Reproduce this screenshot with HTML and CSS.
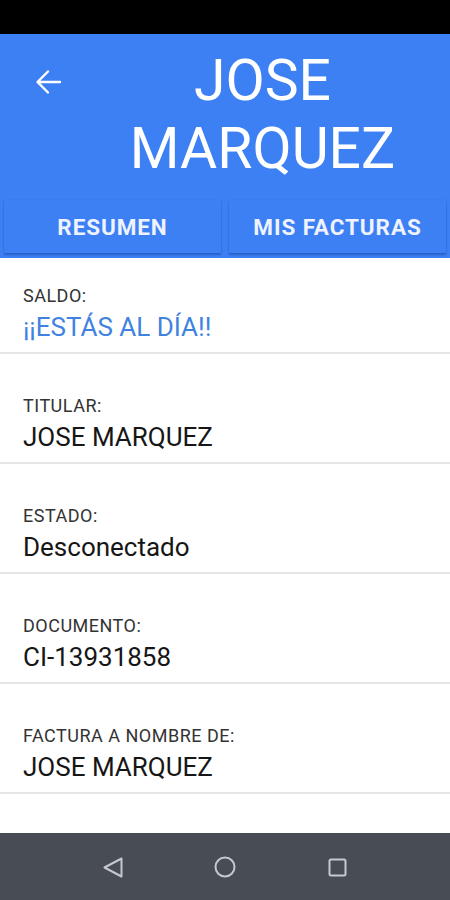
FILE: index.html
```html
<!DOCTYPE html>
<html>
<head>
<meta charset="utf-8">
<link rel="stylesheet" href="styles.css">
</head>
<body>
<div class="screen">
  <div class="statusbar"></div>
  <header class="header">
    <div class="titlerow">
      <div class="back">
        <svg width="30" height="30" viewBox="0 0 30 30"><path d="M27 15H5M15 4.5L4.5 15L15 25.5" fill="none" stroke="#fff" stroke-width="2.4" stroke-linecap="round" stroke-linejoin="round"/></svg>
      </div>
      <h1 class="title">JOSE<br>MARQUEZ</h1>
    </div>
    <div class="tabs">
      <div class="tab">RESUMEN</div>
      <div class="tab">MIS FACTURAS</div>
    </div>
  </header>
  <main class="content">
    <div class="row first">
      <div class="label">SALDO:</div>
      <div class="value ok">¡¡ESTÁS AL DÍA!!</div>
    </div>
    <div class="row">
      <div class="label">TITULAR:</div>
      <div class="value">JOSE MARQUEZ</div>
    </div>
    <div class="row">
      <div class="label">ESTADO:</div>
      <div class="value">Desconectado</div>
    </div>
    <div class="row">
      <div class="label">DOCUMENTO:</div>
      <div class="value">CI-13931858</div>
    </div>
    <div class="row">
      <div class="label">FACTURA A NOMBRE DE:</div>
      <div class="value">JOSE MARQUEZ</div>
    </div>
  </main>
  <nav class="navbar">
    <svg width="24" height="24" viewBox="0 0 24 24"><path d="M20.5 3.5 L3.5 12.5 L20.5 21.5 Z" fill="none" stroke="#c6c9ce" stroke-width="2" stroke-linejoin="round"/></svg>
    <svg width="24" height="24" viewBox="0 0 24 24"><circle cx="12" cy="12" r="9.5" fill="none" stroke="#c6c9ce" stroke-width="2"/></svg>
    <svg width="24" height="24" viewBox="0 0 24 24"><rect x="4.5" y="4.5" width="16" height="16" rx="1.5" fill="none" stroke="#c6c9ce" stroke-width="2"/></svg>
  </nav>
</div>
</body>
</html>
```
FILE: styles.css
```css
* { box-sizing: border-box; }
html, body { margin: 0; padding: 0; }
body { font-family: Roboto, "Liberation Sans", sans-serif; background: #fff; }
.screen { width: 450px; height: 900px; display: flex; flex-direction: column; overflow: hidden; }
.statusbar { height: 34px; background: #000; flex: none; }
.header { background: #3d80f3; padding: 13px 0 5px; flex: none; }
.titlerow { display: flex; align-items: flex-start; }
.back { width: 75px; padding: 20px 0 0 33px; flex: none; }
.back svg { display: block; }
.title { margin: 0; flex: 1; text-align: center; color: #fff; font-weight: 400; font-size: 57px; line-height: 68px; }
.tabs { display: flex; gap: 8px; padding: 17px 4px 0; }
.tab { flex: 1; height: 53px; display: flex; align-items: center; justify-content: center; color: #eef3ff; font-weight: 700; font-size: 22.5px; letter-spacing: 0.9px; background: #3d80f3; box-shadow: 0 2px 2px rgba(0,40,120,0.35), 0 0 1px rgba(0,40,120,0.2); }
.content { flex: 1; }
.row { padding: 42px 23px 0; height: 110px; border-bottom: 2px solid #e6e6e6; }
.row.first { padding-top: 28px; height: 96px; }
.label { font-size: 18px; color: #333; line-height: 20px; letter-spacing: 0.5px; }
.value { font-size: 26px; color: #161616; line-height: 30px; margin-top: 6px; }
.value.ok { color: #3f82e0; }
.navbar { height: 67px; flex: none; background: #474c55; display: flex; align-items: center; justify-content: center; gap: 88px; }
.navbar svg { display: block; }
```
